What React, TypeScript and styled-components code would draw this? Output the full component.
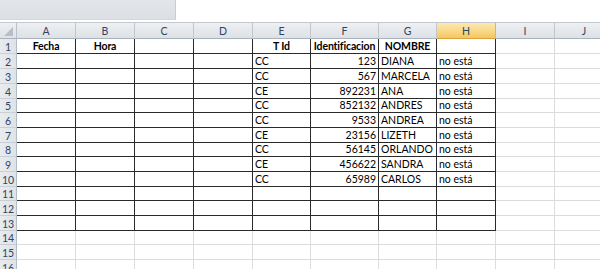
import React from "react";
import styled, { createGlobalStyle, css } from "styled-components";

const GlobalStyle = createGlobalStyle`
  html, body { margin: 0; padding: 0; background: #ffffff; }
  body { font-family: Lato, "Open Sans", "Liberation Sans", sans-serif; overflow: hidden; }
`;

const Page = styled.div`
  width: 600px;
  height: 269px;
  overflow: hidden;
  background: #ffffff;
`;

const FormulaStrip = styled.div`
  display: flex;
  height: 22px;
  background: #ffffff;
`;

const NameArea = styled.div`
  width: 176px;
  height: 20px;
  background: linear-gradient(#e3e6e9, #dcdfe3);
  border-right: 1px solid #c9cdd2;
  border-bottom: 1px solid #d3d7db;
  box-sizing: border-box;
`;

const Sheet = styled.div`
  display: grid;
  grid-template-columns: 17px 59px 59px 59px 59px 58px 68px 58px 59px 59px 59px;
  width: 600px;
`;

const headBase = css`
  box-sizing: border-box;
  display: flex;
  align-items: center;
  justify-content: center;
  font-size: 10.5px;
  color: #2f4566;
`;

const Corner = styled.div`
  ${headBase};
  height: 17px;
  background: linear-gradient(#eef0f2, #dfe2e6);
  border-top: 1px solid #c3c8ce;
  border-right: 1px solid #b9c0c8;
  border-bottom: 1px solid #a9b3be;
  position: relative;
`;

const ColHead = styled.div<{ $active?: boolean }>`
  ${headBase};
  height: 17px;
  padding-top: 1px;
  background: ${(p) =>
    p.$active
      ? "linear-gradient(#fde8b3, #f8d885 55%, #f3c75f)"
      : "linear-gradient(#eef0f2, #dde1e5)"};
  border-top: 1px solid #c3c8ce;
  border-right: 1px solid ${(p) => (p.$active ? "#e2b45a" : "#c1c7cd")};
  border-bottom: 1px solid ${(p) => (p.$active ? "#d9a23d" : "#a9b3be")};
`;

const RowHead = styled.div<{ $h: number }>`
  ${headBase};
  height: ${(p) => p.$h}px;
  background: linear-gradient(90deg, #e9ecef, #dfe2e6);
  border-right: 1px solid #b3bcc6;
  border-bottom: 1px solid #c9cfd5;
  font-size: 10.5px;
  padding-top: 1px;
`;

const Cell = styled.div<{
  $h: number;
  $boxed?: boolean;
  $align?: "left" | "right" | "center";
  $bold?: boolean;
}>`
  box-sizing: border-box;
  height: ${(p) => p.$h}px;
  display: flex;
  align-items: flex-end;
  justify-content: ${(p) =>
    p.$align === "right" ? "flex-end" : p.$align === "center" ? "center" : "flex-start"};
  padding: 0 2px 0 2px;
  border-right: 1px solid ${(p) => (p.$boxed ? "#2a2a2a" : "#dadcdd")};
  border-bottom: 1px solid ${(p) => (p.$boxed ? "#2a2a2a" : "#dadcdd")};
  font-size: 10.5px;
  line-height: 13px;
  font-weight: ${(p) => (p.$bold ? 700 : 400)};
  letter-spacing: ${(p) => (p.$bold ? "-0.15px" : "0")};
  color: #000000;
  white-space: nowrap;
  overflow: visible;
`;

const cols = ["A", "B", "C", "D", "E", "F", "G", "H", "I", "J"];
const heights = [15, 15, 15, 15, 14, 15, 15, 14, 15, 15, 14, 15, 15, 14, 15, 15];

const people: [string, string, string][] = [
  ["CC", "123", "DIANA"],
  ["CC", "567", "MARCELA"],
  ["CE", "892231", "ANA"],
  ["CC", "852132", "ANDRES"],
  ["CC", "9533", "ANDREA"],
  ["CE", "23156", "LIZETH"],
  ["CC", "56145", "ORLANDO"],
  ["CE", "456622", "SANDRA"],
  ["CC", "65989", "CARLOS"],
];

const headers: Record<number, string> = {
  0: "Fecha",
  1: "Hora",
  4: "T Id",
  5: "Identificacion",
  6: "NOMBRE",
};

function cellContent(row: number, col: number): { text: string; align?: "left" | "right" | "center"; bold?: boolean } {
  if (row === 1) {
    return { text: headers[col] ?? "", align: "center", bold: true };
  }
  const p = people[row - 2];
  if (p) {
    if (col === 4) return { text: p[0] };
    if (col === 5) return { text: p[1], align: "right" };
    if (col === 6) return { text: p[2] };
    if (col === 7) return { text: "no está" };
  }
  return { text: "" };
}

export default function App() {
  return (
    <Page>
      <GlobalStyle />
      <FormulaStrip>
        <NameArea />
      </FormulaStrip>
      <Sheet>
        <Corner>
          <svg width="16" height="15" viewBox="0 0 16 15" style={{ position: "absolute", left: 0, top: 0 }}>
            <polygon points="13,4 13,13 4,13" fill="#b8bec6" />
          </svg>
        </Corner>
        {cols.map((c) => (
          <ColHead key={c} $active={c === "H"}>
            {c}
          </ColHead>
        ))}
        {heights.map((h, ri) => {
          const row = ri + 1;
          return (
            <React.Fragment key={row}>
              <RowHead $h={h}>{row}</RowHead>
              {cols.map((c, ci) => {
                const boxed = row <= 13 && ci <= 7;
                const content = cellContent(row, ci);
                return (
                  <Cell key={c} $h={h} $boxed={boxed} $align={content.align} $bold={content.bold}>
                    {content.text}
                  </Cell>
                );
              })}
            </React.Fragment>
          );
        })}
      </Sheet>
    </Page>
  );
}
